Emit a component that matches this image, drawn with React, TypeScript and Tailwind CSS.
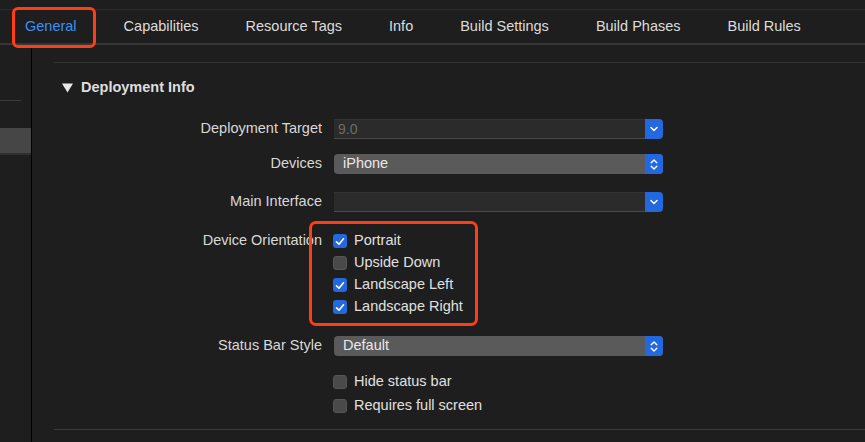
import React from "react";

const FONT = { fontFamily: '"Liberation Sans", Arial, sans-serif' };

const tabs = ["General", "Capabilities", "Resource Tags", "Info", "Build Settings", "Build Phases", "Build Rules"];

function ChevronDown() {
  return (
    <svg width="8" height="6" viewBox="0 0 8 6" fill="none">
      <path d="M1 1.5 L4 4.5 L7 1.5" stroke="white" strokeWidth="1.5" strokeLinecap="round" strokeLinejoin="round" />
    </svg>
  );
}

function UpDown() {
  return (
    <svg width="8" height="13" viewBox="0 0 8 13" fill="none">
      <path d="M1.2 4.8 L4 2 L6.8 4.8" stroke="white" strokeWidth="1.4" strokeLinecap="round" strokeLinejoin="round" />
      <path d="M1.2 8.2 L4 11 L6.8 8.2" stroke="white" strokeWidth="1.4" strokeLinecap="round" strokeLinejoin="round" />
    </svg>
  );
}

function Combo({ value }: { value?: string }) {
  return (
    <div className="flex h-[20px] w-[329px]">
      <div className="flex-1 bg-[#2b2b2b] border-t border-[#333] border-b border-b-[#4a4a4a] pl-[4px] flex items-center text-[14px] text-[#6b6b6b]">
        {value}
      </div>
      <div className="w-[18px] bg-[#2368de] rounded-r-[4px] flex items-center justify-center">
        <ChevronDown />
      </div>
    </div>
  );
}

function Popup({ value }: { value: string }) {
  return (
    <div className="flex h-[20px] w-[329px] rounded-[4px] bg-[#5a5a5a] overflow-hidden">
      <div className="flex-1 pl-[9px] flex items-center text-[14.5px] text-[#e8e8e8]">{value}</div>
      <div className="w-[18px] bg-[#2368de] flex items-center justify-center">
        <UpDown />
      </div>
    </div>
  );
}

function Check({ on, label }: { on: boolean; label: string }) {
  return (
    <div className="flex items-center h-[22px] gap-[7px] -ml-[1px]">
      {on ? (
        <div className="w-[14px] h-[14px] rounded-[3px] bg-[#2468dd] flex items-center justify-center">
          <svg width="10" height="9" viewBox="0 0 10 9" fill="none">
            <path d="M1.5 4.8 L4 7.2 L8.5 1.8" stroke="white" strokeWidth="1.6" strokeLinecap="round" strokeLinejoin="round" />
          </svg>
        </div>
      ) : (
        <div className="w-[14px] h-[14px] rounded-[3px] bg-[#4a4a4a] border border-[#555]" />
      )}
      <span className="text-[14.5px] text-[#e0e0e0]">{label}</span>
    </div>
  );
}

function Row({ label, children, className = "" }: { label?: string; children: React.ReactNode; className?: string }) {
  return (
    <div className={"flex items-center " + className}>
      <div className="w-[268px] text-right text-[14.5px] text-[#d8d8d8]">{label}</div>
      <div className="ml-[12px]">{children}</div>
    </div>
  );
}

export default function App() {
  return (
    <div className="relative w-[865px] h-[442px] bg-[#1e1e1e] overflow-hidden flex flex-col" style={FONT}>
      <div className="h-[10px] border-b border-[#2c2c2c] shrink-0" />
      {/* Tab bar */}
      <div className="h-[35px] border-b-2 border-[#363636] flex items-center pl-[25px] gap-[47px] shrink-0">
        {tabs.map((t, i) => (
          <span key={t} className={"text-[14.5px] pt-[1px] " + (i === 0 ? "text-[#3d8ef2]" : "text-[#dcdcdc]")}>
            {t}
          </span>
        ))}
      </div>

      <div className="flex flex-1">
        {/* Sidebar */}
        <div className="w-[32px] border-r border-black shrink-0">
          <div className="mt-[55px] w-[21px] border-t border-[#3a3a3a]" />
          <div className="mt-[27px] h-[27px] bg-[#464646] border-b-2 border-[#2e2e2e]" />
        </div>

        {/* Main */}
        <div className="flex-1 pl-[22px]">
          <div className="mt-[17px] border-t border-[#333]" />
          <div className="mt-[13px] h-[24px] flex items-center pl-[8px] gap-[8px]">
            <svg width="11" height="10" viewBox="0 0 11 10">
              <path d="M0 0.5 H11 L5.5 9.5 Z" fill="#e8e8e8" />
            </svg>
            <span className="text-[14.5px] font-bold text-[#dedede]">Deployment Info</span>
          </div>

          <Row label="Deployment Target" className="mt-[19px] h-[20px]">
            <Combo value="9.0" />
          </Row>
          <Row label="Devices" className="mt-[15px] h-[20px]">
            <Popup value="iPhone" />
          </Row>
          <Row label="Main Interface" className="mt-[18px] h-[20px]">
            <Combo />
          </Row>

          <div className="mt-[18px] flex">
            <div className="w-[268px] h-[22px] flex items-center justify-end text-[14.5px] text-[#d8d8d8]">Device Orientation</div>
            <div className="ml-[12px] flex flex-col">
              <Check on label="Portrait" />
              <Check on={false} label="Upside Down" />
              <Check on label="Landscape Left" />
              <Check on label="Landscape Right" />
            </div>
          </div>

          <Row label="Status Bar Style" className="mt-[18px] h-[20px]">
            <Popup value="Default" />
          </Row>

          <div className="mt-[15px] ml-[280px] flex flex-col gap-[2px]">
            <Check on={false} label="Hide status bar" />
            <Check on={false} label="Requires full screen" />
          </div>

          <div className="mt-[12px] border-t border-[#3a3a3a]" />
        </div>
      </div>

      {/* Highlight boxes */}
      <div className="absolute left-[12px] top-[7px] w-[84px] h-[41px] border-[3px] border-[#ff3d17] rounded-[6px]" />
      <div className="absolute left-[309px] top-[221px] w-[169px] h-[105px] border-[3px] border-[#ff3d17] rounded-[7px]" />
    </div>
  );
}
